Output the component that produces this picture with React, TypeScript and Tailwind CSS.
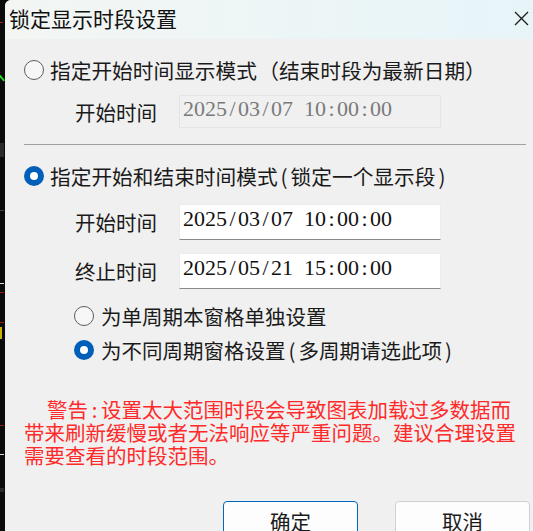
import React from "react";

const CJK = { fontFamily: '"Noto Sans CJK SC", sans-serif' };

function Radio({ checked }: { checked?: boolean }) {
  if (checked) {
    return (
      <span className="flex h-[20px] w-[20px] shrink-0 items-center justify-center rounded-full bg-[#005fb8]">
        <span className="h-[8px] w-[8px] rounded-full bg-white" />
      </span>
    );
  }
  return <span className="h-[20px] w-[20px] shrink-0 rounded-full border border-[#5d5d5d] bg-[#f7f7f7]" />;
}

// fixed-width cells for punctuation (SimSun style widths)
function Open({ ch }: { ch: string }) {
  return <span className="inline-block w-[22px] indent-0 text-right [font-feature-settings:'halt']">{ch}</span>;
}

function Close({ ch }: { ch: string }) {
  return <span className="inline-block w-[22px] indent-0 text-left [font-feature-settings:'halt']">{ch}</span>;
}

function Half({ ch }: { ch: string }) {
  return <span className="inline-block w-[13px] indent-0 text-center">{ch}</span>;
}

// half-width serif digits, each 11px wide
function Digits({ value }: { value: string }) {
  return (
    <span className="flex text-[22px] leading-[24px]" style={{ fontFamily: '"Liberation Serif", serif' }}>
      {value.split("").map((c, i) => (
        <span key={i} className="inline-block w-[11px] text-center">
          {c === " " ? "\u00a0" : c}
        </span>
      ))}
    </span>
  );
}

function TimeRow({ label, value, disabled }: { label: string; value: string; disabled?: boolean }) {
  return (
    <div className="flex items-center pl-[51px]">
      <span className="w-[104px] text-[20.5px] leading-[24px] text-[#1a1a1a]">{label}</span>
      <div
        className={
          disabled
            ? "flex h-[33px] w-[262px] items-center border border-[#e4e4e4] bg-[#f0f0f0] pb-[5px] pl-[3px] text-[#7a7a7a]"
            : "flex h-[36px] w-[262px] items-center border border-[#ececec] border-b-[#8a8a8a] bg-white pb-[6px] pl-[3px] text-[#111111]"
        }
      >
        <Digits value={value} />
      </div>
    </div>
  );
}

export default function App() {
  return (
    <div className="flex h-[531px] w-[533px] overflow-hidden bg-[#0a0a0a]" style={CJK}>
      <div className="relative w-[5px] shrink-0 bg-[#0b0b0b]">
        <span className="absolute left-0 top-[22px] h-[1px] w-[3px] bg-[#b02020]" />
        <span className="absolute left-0 top-[72px] h-[10px] w-[2px] rotate-[-40deg] bg-[#22dd22]" />
        <span className="absolute left-0 top-[143px] h-[14px] w-[4px] bg-[#2a2a2a]" />
        <span className="absolute left-0 top-[210px] h-[1px] w-[4px] bg-[#444444]" />
        <span className="absolute left-0 top-[283px] h-[1px] w-[4px] bg-[#dddddd]" />
        <span className="absolute left-0 top-[292px] h-[1px] w-[4px] bg-[#a01818]" />
        <span className="absolute left-0 top-[322px] h-[1px] w-[4px] bg-[#a01818]" />
        <span className="absolute left-0 top-[327px] h-[12px] w-[2px] bg-[#c8b400]" />
        <span className="absolute left-0 top-[425px] h-[1px] w-[4px] bg-[#a01818]" />
        <span className="absolute left-0 top-[454px] h-[1px] w-[4px] bg-[#dddddd]" />
        <span className="absolute left-0 top-[488px] h-[4px] w-[4px] bg-[#2a2a2a]" />
      </div>
      <div className="flex min-w-0 flex-1 flex-col overflow-hidden rounded-tl-[6px] bg-[#f0f0f0]">
        <div className="flex h-[39px] shrink-0 items-center justify-between bg-gradient-to-r from-[#f3f6f3] to-[#e7f5f9] pb-[3px] pl-[4px] pr-[4px]">
          <span className="text-[21px] leading-[24px] text-[#111111]">锁定显示时段设置</span>
          <svg width="15" height="15" viewBox="0 0 15 15">
            <path d="M1 1 L14 14 M14 1 L1 14" stroke="#1a1a1a" strokeWidth="1.3" fill="none" />
          </svg>
        </div>
        <div className="flex flex-col px-[19px] pt-[19px] text-[#1a1a1a]">
          <div className="flex items-center gap-[6px]">
            <Radio />
            <span className="text-[20.7px] leading-[24px]">
              指定开始时间显示模式<Open ch="（" />结束时段为最新日期<Close ch="）" />
            </span>
          </div>
          <div className="mt-[13px]">
            <TimeRow label="开始时间" value="2025/03/07 10:00:00" disabled />
          </div>
          <div className="mt-[16px] h-[1px] w-[502px] bg-[#a0a0a0]" />
          <div className="mt-[19px] flex items-center gap-[6px]">
            <Radio checked />
            <span className="text-[20.7px] leading-[24px]">
              指定开始和结束时间模式<Half ch="(" />锁定一个显示段<Half ch=")" />
            </span>
          </div>
          <div className="mt-[16px]">
            <TimeRow label="开始时间" value="2025/03/07 10:00:00" />
          </div>
          <div className="mt-[13px]">
            <TimeRow label="终止时间" value="2025/05/21 15:00:00" />
          </div>
          <div className="mt-[15px] flex items-center gap-[7px] pl-[50px]">
            <Radio />
            <span className="text-[20.5px] leading-[24px]">为单周期本窗格单独设置</span>
          </div>
          <div className="mt-[10px] flex items-center gap-[7px] pl-[50px]">
            <Radio checked />
            <span className="text-[20.5px] leading-[24px]">
              为不同周期窗格设置<Half ch="(" />多周期请选此项<Half ch=")" />
            </span>
          </div>
          <p className="mt-[36px] w-[497px] indent-[23px] text-[20.5px] leading-[23px] text-[#ff2a2a]">
            警告<Half ch=":" />设置太大范围时段会导致图表加载过多数据而带来刷新缓慢或者无法响应等严重问题。建议合理设置需要查看的时段范围。
          </p>
          <div className="mt-[34px] flex gap-[37px] pl-[199px]">
            <button
              type="button"
              className="flex h-[38px] w-[135px] shrink-0 items-start justify-center rounded-[4px] border border-[#0067c0] bg-[#fdfdfd] pt-[7px] text-[20.5px] leading-[24px] text-[#1a1a1a]"
            >
              确定
            </button>
            <button
              type="button"
              className="flex h-[38px] w-[135px] shrink-0 items-start justify-center rounded-[4px] border border-[#d0d0d0] bg-[#fdfdfd] pt-[7px] text-[20.5px] leading-[24px] text-[#1a1a1a]"
            >
              取消
            </button>
          </div>
        </div>
      </div>
    </div>
  );
}
